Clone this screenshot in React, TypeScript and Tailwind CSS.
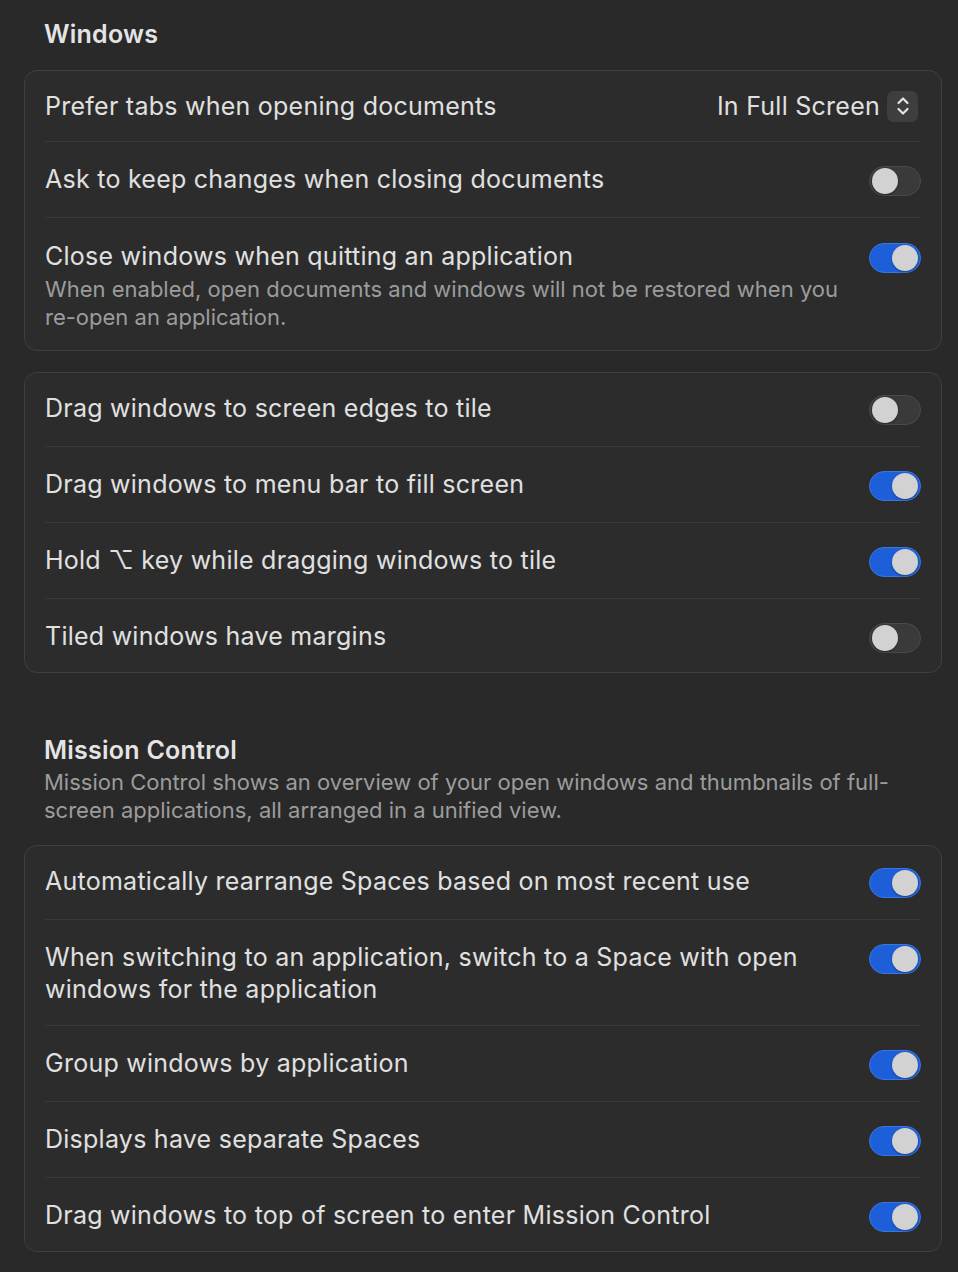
import React from 'react';

type Row = {
  label: string;
  desc?: string;
  on?: boolean;
  popup?: string;
  tall?: boolean;
};

const windowsA: Row[] = [
  { label: 'Prefer tabs when opening documents', popup: 'In Full Screen' },
  { label: 'Ask to keep changes when closing documents', on: false },
  {
    label: 'Close windows when quitting an application',
    desc: 'When enabled, open documents and windows will not be restored when you re-open an application.',
    on: true,
  },
];

const windowsB: Row[] = [
  { label: 'Drag windows to screen edges to tile', on: false },
  { label: 'Drag windows to menu bar to fill screen', on: true },
  { label: 'Hold \u2325 key while dragging windows to tile', on: true },
  { label: 'Tiled windows have margins', on: false },
];

const missionRows: Row[] = [
  { label: 'Automatically rearrange Spaces based on most recent use', on: true },
  {
    label: 'When switching to an application, switch to a Space with open windows for the application',
    on: true,
    tall: true,
  },
  { label: 'Group windows by application', on: true },
  { label: 'Displays have separate Spaces', on: true },
  { label: 'Drag windows to top of screen to enter Mission Control', on: true },
];

function Toggle({ on }: { on?: boolean }) {
  if (on) {
    return (
      <div className="flex h-[30px] w-[52px] shrink-0 items-center justify-end rounded-full border border-[#3a76e2] bg-[#1d5fd8] px-[2px]">
        <div className="h-[26px] w-[26px] rounded-full bg-[#d2d2d2] shadow-[0_1px_2px_rgba(0,0,0,0.35)]" />
      </div>
    );
  }
  return (
    <div className="flex h-[30px] w-[52px] shrink-0 items-center justify-start rounded-full border border-[#4a4a4a] bg-[#3a3a3a] px-[2px]">
      <div className="h-[26px] w-[26px] rounded-full bg-[#d2d2d2] shadow-[0_1px_2px_rgba(0,0,0,0.35)]" />
    </div>
  );
}

function Popup({ value }: { value: string }) {
  return (
    <div className="mr-[3px] flex items-center gap-[7px]">
      <span className="text-[25px] leading-[32px] tracking-[0.01em] text-[#e0e0e0]">{value}</span>
      <div className="flex h-[31px] w-[31px] items-center justify-center rounded-[7px] bg-[#3e3e3e]">
        <svg width="16" height="24" viewBox="0 0 16 24" fill="none">
          <path d="M3.5 9 L8 4.5 L12.5 9" stroke="#e4e4e4" strokeWidth="2.2" strokeLinecap="round" strokeLinejoin="round" />
          <path d="M3.5 15 L8 19.5 L12.5 15" stroke="#e4e4e4" strokeWidth="2.2" strokeLinecap="round" strokeLinejoin="round" />
        </svg>
      </div>
    </div>
  );
}

function Card({ rows }: { rows: Row[] }) {
  return (
    <div className="rounded-[13px] border border-[#3f3f3f] bg-[#2c2c2c] px-5">
      {rows.map((r, i) => {
        const first = i === 0;
        const last = i === rows.length - 1;
        let pad = first ? 'pt-[19px] ' : 'pt-[21px] ';
        if (r.desc) pad = 'pt-[22px] pb-[19px]';
        else if (r.popup) pad += 'pb-[19px]';
        else if (r.tall || last) pad += 'pb-[20px]';
        else pad += 'pb-[22px]';
        return (
          <div
            key={r.label}
            className={
              'flex items-start justify-between gap-6 ' + (i > 0 ? 'border-t border-[#3a3a3a] ' : '') + pad
            }
          >
            <div className="flex flex-col">
              <span className="text-[25px] leading-[32px] tracking-[0.01em] text-[#e0e0e0]">{r.label}</span>
              {r.desc && (
                <span className="mt-[3px] text-[22px] leading-[28px] text-[#9c9c9c]">{r.desc}</span>
              )}
            </div>
            {r.popup ? (
              <div className="flex h-[32px] items-center">
                <Popup value={r.popup} />
              </div>
            ) : (
              <div className="h-[32px] pt-[3px]">
                <Toggle on={r.on} />
              </div>
            )}
          </div>
        );
      })}
    </div>
  );
}

export default function App() {
  return (
    <div
      className="min-h-[1272px] bg-[#292929] pl-6 pr-4 pt-[18px] antialiased"
      style={{ fontFamily: 'Inter, "Noto Sans", sans-serif' }}
    >
      <h2 className="px-5 text-[25px] font-semibold leading-[32px] tracking-[0.01em] text-[#e4e4e4]">Windows</h2>
      <div className="mt-5 flex flex-col gap-[21px]">
        <Card rows={windowsA} />
        <Card rows={windowsB} />
      </div>

      <div className="mt-[61px] px-5">
        <h2 className="text-[25px] font-semibold leading-[32px] tracking-[0.01em] text-[#e4e4e4]">Mission Control</h2>
        <p className="mt-[2px] text-[22px] leading-[28px] text-[#9c9c9c]">
          Mission Control shows an overview of your open windows and thumbnails of full-screen applications, all arranged in a unified view.
        </p>
      </div>
      <div className="mt-[21px]">
        <Card rows={missionRows} />
      </div>
    </div>
  );
}
